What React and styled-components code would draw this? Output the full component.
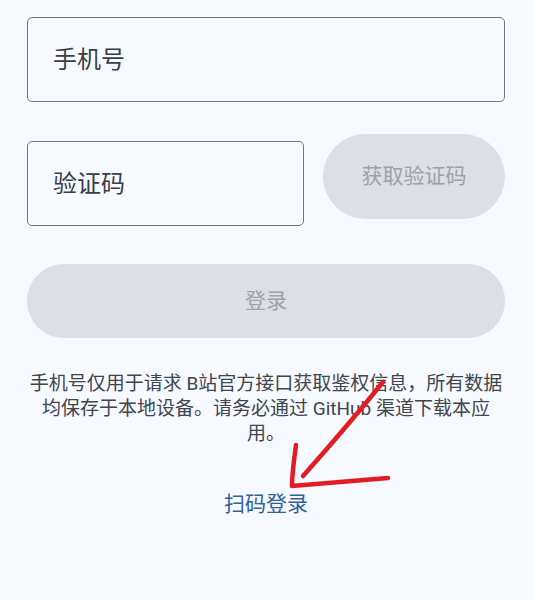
import styled, { createGlobalStyle } from "styled-components";

const GlobalStyle = createGlobalStyle`
  html, body {
    margin: 0;
    padding: 0;
    background: #f6f9ff;
  }
  body {
    font-family: "Roboto", "Noto Sans CJK SC", sans-serif;
  }
`;

const Page = styled.div`
  position: relative;
  width: 534px;
  height: 600px;
  box-sizing: border-box;
  padding: 17px 29px 0 27px;
  display: flex;
  flex-direction: column;
  background: #f6f9ff;
`;

const Field = styled.div`
  box-sizing: border-box;
  height: ${({ $h }) => $h}px;
  width: ${({ $w }) => ($w ? `${$w}px` : "100%")};
  flex-shrink: 0;
  margin-top: ${({ $mt }) => $mt || 0}px;
  border: 1.5px solid #74777f;
  border-radius: 5px;
  display: flex;
  align-items: center;
  padding: 0 0 4px 25px;
  font-size: 24px;
  color: #3a3e45;
`;

const CodeRow = styled.div`
  display: flex;
  align-items: flex-start;
  gap: 19px;
  margin-top: 32px;
`;

const PillButton = styled.button`
  box-sizing: border-box;
  border: none;
  border-radius: 999px;
  background: #dcdfe5;
  color: #9ea1a8;
  font-family: inherit;
  font-size: 21px;
  height: ${({ $h }) => $h}px;
  flex: ${({ $wide }) => ($wide ? "none" : 1)};
  margin-top: ${({ $mt }) => $mt || 0}px;
  display: flex;
  align-items: center;
  justify-content: center;
  padding: 0 0 5px;
`;

const Notice = styled.p`
  margin: 33px 0 0;
  font-size: 19px;
  line-height: 25px;
  color: #41454d;
  text-align: center;
`;

const QrLink = styled.a`
  align-self: center;
  margin-top: 43px;
  font-size: 21px;
  line-height: 30px;
  color: #30619b;
  cursor: pointer;
`;

const Annotation = styled.svg`
  position: absolute;
  left: 0;
  top: 0;
  pointer-events: none;
`;

export default function App() {
  return (
    <>
      <GlobalStyle />
      <Page>
        <Field $h={85}>手机号</Field>
        <CodeRow>
          <Field $h={85} $w={277} $mt={7}>验证码</Field>
          <PillButton $h={85}>获取验证码</PillButton>
        </CodeRow>
        <PillButton $h={74} $mt={38} $wide>
          登录
        </PillButton>
        <Notice>
          手机号仅用于请求 B站官方接口获取鉴权信息，所有数据均保存于本地设备。请务必通过 GitHub 渠道下载本应用。
        </Notice>
        <QrLink>扫码登录</QrLink>
        <Annotation width="534" height="600" viewBox="0 0 534 600">
          <path
            d="M383 382 C 362 408 335 440 303 476"
            fill="none"
            stroke="#e31b22"
            strokeWidth="4.5"
            strokeLinecap="round"
          />
          <path
            d="M296 445 C 294 460 292 474 292 486 L 388 478"
            fill="none"
            stroke="#e31b22"
            strokeWidth="4.5"
            strokeLinecap="round"
            strokeLinejoin="round"
          />
        </Annotation>
      </Page>
    </>
  );
}
